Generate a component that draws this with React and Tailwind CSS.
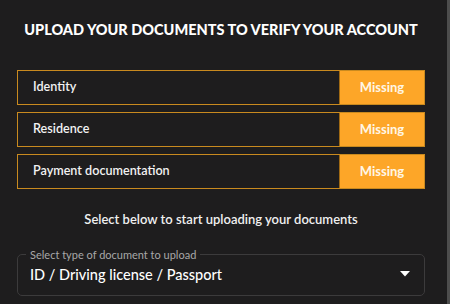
export default function App() {
  const docs = ['Identity', 'Residence', 'Payment documentation'];

  return (
    <div className="flex h-[304px] w-[450px] overflow-hidden bg-[#1e1d1e] font-['Lato',sans-serif]">
      <div className="w-[442px] px-[17px]">
        {/* Title */}
        <h1 className="pt-[21px] text-center text-[14.5px] font-black uppercase leading-[18px] text-white">
          Upload your documents to verify your account
        </h1>

        {/* Status rows */}
        <div className="mt-[31px] flex flex-col gap-[7px]">
          {docs.map((doc) => (
            <div key={doc} className="flex h-[35px] border border-[#c98a1f]">
              <div className="flex flex-1 items-center pl-[15px] text-[12.6px] font-semibold text-[#f2f2f2]">
                {doc}
              </div>
              <div className="flex w-[85px] items-center justify-center border-l border-[#a06a14] bg-[#fda628] text-[13px] font-bold text-[#fff6e6]">
                Missing
              </div>
            </div>
          ))}
        </div>

        <p className="mt-[21px] text-center text-[13px] font-semibold text-[#f0f0f0]">
          Select below to start uploading your documents
        </p>

        {/* Select field */}
        <fieldset className="mt-[20px] h-[46px] rounded-[5px] border border-[#3c3b3c] px-[8px]">
          <legend className="px-[4px] text-[11px] leading-[10px] text-[#a8a8a8]">
            Select type of document to upload
          </legend>
          <div className="flex items-center justify-between pl-[4px] pr-[6px] pt-[4px]">
            <span className="text-[14.5px] font-medium text-white">ID / Driving license / Passport</span>
            <svg width="10" height="6" viewBox="0 0 10 6">
              <path d="M0 0 L10 0 L5 5.5 Z" fill="#ffffff" />
            </svg>
          </div>
        </fieldset>
      </div>
      <div className="flex-1" />
      <div className="w-[3px] bg-[#4d4d4d]" />
    </div>
  );
}
